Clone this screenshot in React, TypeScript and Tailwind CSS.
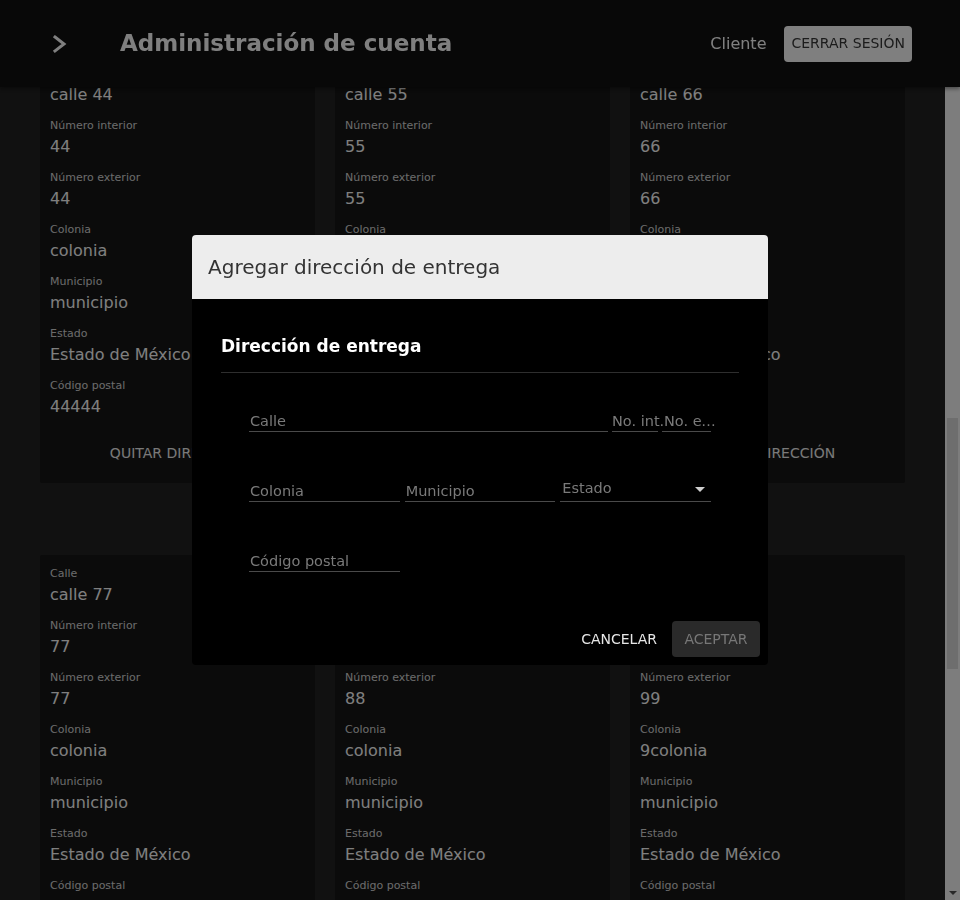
import { useLayoutEffect, useRef, useState } from "react";

type Address = {
  calle: string;
  interior: string;
  exterior: string;
  colonia: string;
  municipio: string;
  estado: string;
  cp: string;
};

const mk = (n: string, colonia = "colonia"): Address => ({
  calle: `calle ${n}`,
  interior: n,
  exterior: n,
  colonia,
  municipio: "municipio",
  estado: "Estado de México",
  cp: n.repeat(3).slice(0, 5),
});

const rows: Address[][] = [
  [mk("11"), mk("22"), mk("33")],
  [mk("44"), mk("55"), mk("66")],
  [mk("77"), mk("88"), mk("99", "9colonia")],
];

const fields: { key: keyof Address; label: string }[] = [
  { key: "calle", label: "Calle" },
  { key: "interior", label: "Número interior" },
  { key: "exterior", label: "Número exterior" },
  { key: "colonia", label: "Colonia" },
  { key: "municipio", label: "Municipio" },
  { key: "estado", label: "Estado" },
  { key: "cp", label: "Código postal" },
];

function AddressCard({ a }: { a: Address }) {
  return (
    <div className="h-[428px] rounded-[2px] bg-[#161616] px-[10px] pt-[11px]">
      {fields.map((f) => (
        <div key={f.key} className="mb-[11px]">
          <p className="text-[11px] leading-4 text-[#d6d6d6]">{f.label}</p>
          <p className="mt-px text-base leading-6 text-white">{a[f.key]}</p>
        </div>
      ))}
      <button className="mt-[5px] h-9 w-full text-[14px] uppercase text-[#f2f2f2]">
        Quitar dirección
      </button>
    </div>
  );
}

function Field({
  label,
  className = "",
  labelClass = "pl-px",
}: {
  label: string;
  className?: string;
  labelClass?: string;
}) {
  return (
    <div className={`flex h-[30px] min-w-0 items-end border-b border-[#4a4a4a] ${className}`}>
      <span className={`shrink-0 whitespace-nowrap text-[14.5px] leading-5 text-[#7a7a7a] ${labelClass}`}>
        {label}
      </span>
    </div>
  );
}

export default function App() {
  const scroller = useRef<HTMLDivElement>(null);
  const target = useRef<HTMLDivElement>(null);
  const [thumb, setThumb] = useState({ top: 0, height: 0 });

  useLayoutEffect(() => {
    const s = scroller.current;
    const t = target.current;
    if (!s || !t) return;
    s.scrollTop += t.getBoundingClientRect().top - 55;
    const track = s.clientHeight - 30;
    const height = Math.max(20, (track * s.clientHeight) / s.scrollHeight);
    const range = s.scrollHeight - s.clientHeight;
    const top = 15 + (range > 0 ? (s.scrollTop / range) * (track - height) : 0);
    setThumb({ top, height });
  }, []);

  return (
    <div className="flex h-screen font-['DejaVu_Sans',sans-serif]">
      <div ref={scroller} className="min-w-0 flex-1 overflow-y-scroll bg-[#222222] [scrollbar-width:none]">
        <header className="fixed inset-x-0 top-0 z-10 flex h-[87px] items-center bg-[#101010] pl-[52px] pr-[48px] shadow-[0_2px_4px_rgba(0,0,0,0.4)]">
          <svg width="16" height="20" viewBox="0 0 16 20" fill="none" stroke="#ffffff" strokeWidth="3" strokeLinecap="square">
            <polyline points="3,3 12,10 3,17" />
          </svg>
          <h1 className="ml-[52px] text-[23px] font-bold text-white">Administración de cuenta</h1>
          <span className="ml-auto text-base text-white">Cliente</span>
          <button className="ml-[18px] h-9 rounded bg-white px-[7px] text-[14px] uppercase text-[#383838]">
            Cerrar sesión
          </button>
        </header>

        <main className="px-10 pb-[191px] pt-[127px]">
          <section className="h-[800px]">
            <h2 className="mb-6 text-xl font-bold text-white">Datos de la cuenta</h2>
            <div className="rounded-[2px] bg-[#161616] px-[10px] py-[10px]">
              {["Nombre", "Apellidos", "Correo electrónico", "Teléfono"].map((l, i) => (
                <div key={l} className="mb-3">
                  <p className="text-[11px] leading-4 text-[#d6d6d6]">{l}</p>
                  <p className="text-base leading-6 text-white">
                    {["Cliente", "Prueba", "cliente@correo.com", "5555555555"][i]}
                  </p>
                </div>
              ))}
            </div>
          </section>
          <div className="flex h-[73px] items-start justify-between">
            <h2 className="text-xl font-bold text-white">Direcciones de entrega</h2>
            <button className="h-9 rounded bg-white px-4 text-[14px] uppercase text-[#383838]">
              Agregar dirección
            </button>
          </div>

          <div className="flex flex-col gap-y-[72px]">
            {rows.map((row, i) => (
              <div key={i} ref={i === 1 ? target : undefined} className="grid grid-cols-3 gap-x-5">
                {row.map((a) => (
                  <AddressCard key={a.calle} a={a} />
                ))}
              </div>
            ))}
          </div>

          <section className="mt-[72px] h-[428px] rounded-[2px] bg-[#161616] p-[10px]">
            <p className="text-[11px] leading-4 text-[#d6d6d6]">Métodos de pago</p>
            <p className="text-base leading-6 text-white">Sin métodos registrados</p>
          </section>
        </main>
      </div>

      {/* scrollbar of the page */}
      <div className="flex w-[15px] shrink-0 flex-col bg-[#fafafa]">
        <div style={{ height: thumb.top }} />
        <div className="mx-[2px] bg-[#dcdcdc]" style={{ height: thumb.height }} />
        <div className="mt-auto flex h-[15px] items-center justify-center">
          <svg width="8" height="4" viewBox="0 0 8 4">
            <path d="M0 0h8L4 4z" fill="#505050" />
          </svg>
        </div>
      </div>

      <div className="fixed inset-0 z-20 bg-black/50" />

      <div className="fixed inset-0 z-30 flex items-center justify-center">
        <div className="w-[576px] overflow-hidden rounded bg-black">
          <div className="flex h-16 items-center bg-[#ededed] px-4">
            <h3 className="text-[20px] text-[#333333]">Agregar dirección de entrega</h3>
          </div>
          <div className="px-[29px] pt-[36px]">
            <h4 className="text-[17px] font-bold leading-[22px] text-white">Dirección de entrega</h4>
            <div className="mt-[15px] h-px bg-[#2e2e2e]" />
            <div className="px-[28px] pt-[29px]">
              <div className="flex gap-1">
                <Field label="Calle" className="flex-1" />
                <Field label="No. int." className="w-[46px]" labelClass="pl-0" />
                <Field label="No. exterior" className="w-[49px]" labelClass="w-[56px] truncate pl-[2px]" />
              </div>
              <div className="mt-10 grid grid-cols-3 gap-[5px]">
                <Field label="Colonia" />
                <Field label="Municipio" />
                <div className="flex h-[30px] items-end justify-between border-b border-[#4a4a4a] pb-[3px]">
                  <span className="pl-[2px] text-[14.5px] leading-5 text-[#7a7a7a]">Estado</span>
                  <svg width="10" height="5" viewBox="0 0 10 5" className="mb-[6px] mr-[6px]">
                    <path d="M0 0h10L5 5z" fill="#cfcfcf" />
                  </svg>
                </div>
              </div>
              <div className="mt-10 grid grid-cols-3 gap-[5px]">
                <Field label="Código postal" />
              </div>
            </div>
          </div>
          <div className="mt-[49px] flex justify-end gap-[7px] px-2 pb-2">
            <button className="h-9 px-2 text-[14px] uppercase text-[#e6e6e6]">Cancelar</button>
            <button className="h-9 w-[88px] rounded bg-[#2a2a2a] text-[14px] uppercase text-[#777777]">
              Aceptar
            </button>
          </div>
        </div>
      </div>
    </div>
  );
}
